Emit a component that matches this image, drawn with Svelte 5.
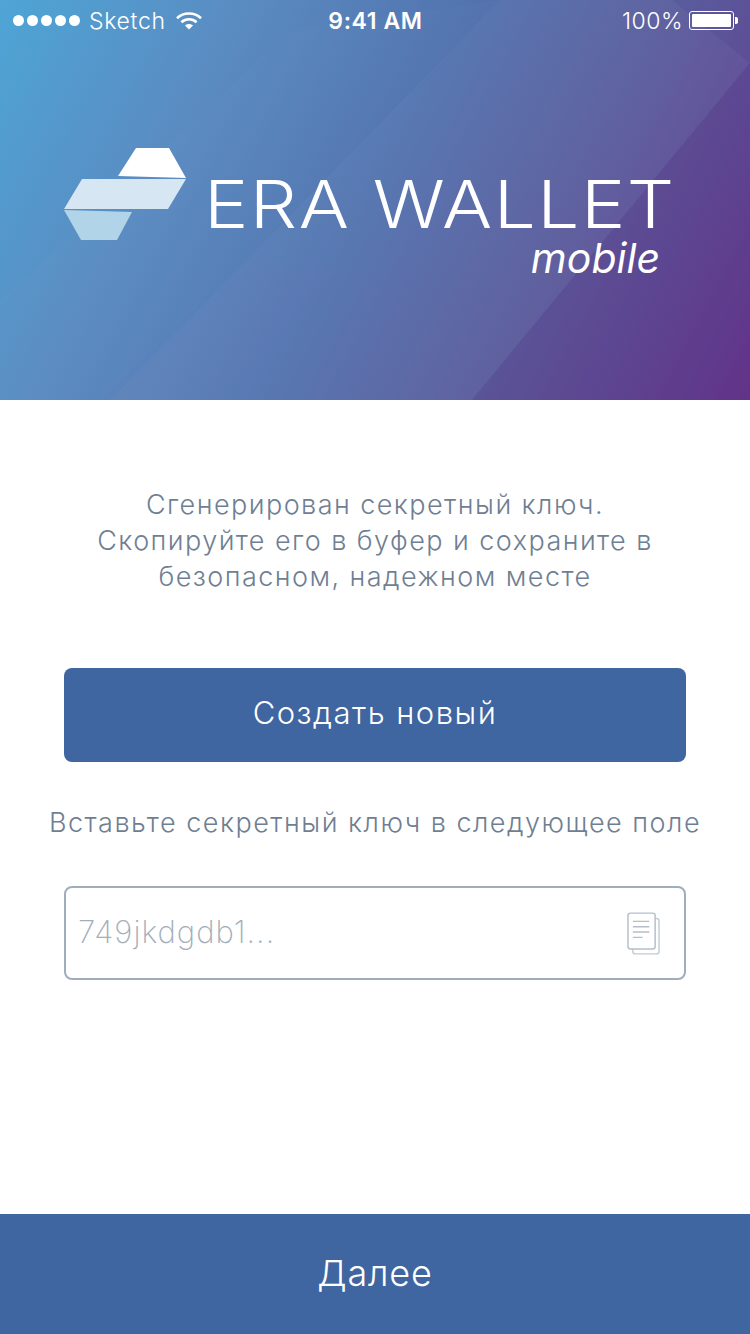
<script lang="ts">
	let secret = $state('');
</script>

<div class="page">
	<header class="hero">
		<svg class="facets" viewBox="0 0 750 400" preserveAspectRatio="none" aria-hidden="true">
			<polygon points="110,400 500,0 672,0 750,63 472,400" fill="#fff" opacity="0.04" />
			<polygon points="0,300 290,30 500,0 110,400 0,400" fill="#fff" opacity="0.015" />
			<polygon points="100,400 250,270 340,270 220,400" fill="#8a6fc0" opacity="0.06" />
			<polygon points="472,400 750,63 750,400" fill="#5a2a80" opacity="0.14" />
		</svg>

		<div class="status">
			<div class="status-left">
				<span class="dots">
					{#each [1, 2, 3, 4, 5] as dot (dot)}
						<i></i>
					{/each}
				</span>
				<span class="carrier">Sketch</span>
				<svg class="wifi" width="26" height="18" viewBox="0 0 26 18" aria-hidden="true">
					<path d="M1 6.200C7.600 0 18.400 0 25 6.200" fill="none" stroke="#fff" stroke-width="2.600" />
					<path d="M5.400 10.200C9.700 6.300 16.300 6.300 20.600 10.200" fill="none" stroke="#fff" stroke-width="2.600" />
					<path d="M9 13.600C11.400 11.600 14.600 11.600 17 13.600L13 17.600Z" fill="#fff" />
				</svg>
			</div>
			<div class="clock">9:41 AM</div>
			<div class="status-right">
				<span class="percent">100%</span>
				<span class="battery"><i></i></span>
				<span class="cap"></span>
			</div>
		</div>

		<div class="brand">
			<svg class="mark" width="122" height="92" viewBox="0 0 122 92" aria-hidden="true">
				<polygon points="54,28 72,0 105,0 122,30" fill="#fff" />
				<polygon points="18,31 122,31 104,61 0,61" fill="#d6e6f2" />
				<polygon points="0,62 68,64 53,92 17,92" fill="#b2d4e9" />
			</svg>
			<div class="wordmark">
				<div class="name">ERA WALLET</div>
				<div class="sub">mobile</div>
			</div>
		</div>
	</header>

	<main class="content">
		<p class="intro">
			Сгенерирован секретный ключ.<br />
			Скопируйте его в буфер и сохраните в<br />
			безопасном, надежном месте
		</p>

		<button class="primary" type="button">Создать новый</button>

		<p class="hint">Вставьте секретный ключ в следующее поле</p>

		<div class="field">
			<input type="text" placeholder="749jkdgdb1..." bind:value={secret} />
			<svg width="33" height="43" viewBox="0 0 34 44" aria-hidden="true">
				<path d="M6 38v2.500A2.500 2.500 0 0 0 8.500 43h22a2.500 2.500 0 0 0 2.500-2.500V9A2.500 2.500 0 0 0 30.500 6.500H29" fill="none" stroke="#c3ccd6" stroke-width="1.500" />
				<rect x="1" y="1" width="28" height="37" rx="2.500" fill="#fff" stroke="#b4bfcb" stroke-width="1.500" />
				<path d="M6 9.500h17M6 15h17M6 20.500h17M6 26h10" stroke="#b4bfcb" stroke-width="1.500" />
			</svg>
		</div>
	</main>

	<button class="next" type="button">Далее</button>
</div>

<style>
	:global(body) {
		background: #fff;
	}

	.page {
		display: flex;
		flex-direction: column;
		width: 750px;
		height: 1334px;
		overflow: hidden;
		font-family: Inter, 'Noto Sans', sans-serif;
	}

	.hero {
		position: relative;
		flex: none;
		height: 400px;
		background: linear-gradient(118deg, #4ea5d6 0%, #5a8cc2 25%, #5272ae 50%, #5a5a9c 72%, #63358a 100%);
		color: #fff;
	}

	.facets {
		position: absolute;
		inset: 0;
		width: 100%;
		height: 100%;
	}

	.status {
		position: relative;
		display: grid;
		grid-template-columns: 1fr auto 1fr;
		align-items: center;
		height: 41px;
		padding: 0 12px 0 13px;
		font-size: 23px;
		font-weight: 300;
	}

	.status-left {
		display: flex;
		align-items: center;
	}

	.carrier {
		letter-spacing: 0.700px;
	}

	.dots {
		display: flex;
		gap: 3px;
		margin-right: 9px;
	}

	.dots i {
		width: 11px;
		height: 11px;
		border-radius: 50%;
		background: #fff;
	}

	.wifi {
		margin-left: 10px;
	}

	.clock {
		font-weight: 600;
		font-size: 23px;
		letter-spacing: 0.600px;
	}

	.status-right {
		display: flex;
		align-items: center;
		justify-content: flex-end;
	}

	.percent {
		letter-spacing: 0.500px;
	}

	.battery {
		display: block;
		width: 45px;
		height: 19px;
		margin-left: 6px;
		padding: 2px;
		border: 1px solid #fff;
		border-radius: 3px;
		box-sizing: border-box;
	}

	.battery i {
		display: block;
		height: 100%;
		border-radius: 1px;
		background: #fff;
	}

	.cap {
		width: 3px;
		height: 7px;
		margin-left: 1px;
		border-radius: 0 2px 2px 0;
		background: #fff;
	}

	.brand {
		position: relative;
		display: flex;
		align-items: flex-start;
		margin: 107px 0 0 64px;
	}

	.wordmark {
		width: 470px;
		margin: 26px 0 0 18px;
	}

	.name {
		font-size: 66px;
		font-weight: 300;
		line-height: 60px;
		letter-spacing: 1.300px;
		white-space: nowrap;
		transform: scaleX(1.13);
		transform-origin: left center;
	}

	.sub {
		padding-right: 14px;
		font-size: 41px;
		font-style: italic;
		line-height: 48px;
		text-align: right;
	}

	.content {
		display: flex;
		flex: 1;
		flex-direction: column;
		padding: 87px 64px 0;
		color: #6f7f93;
	}

	.intro {
		margin: 0 -30px 73px;
		font-size: 27px;
		font-weight: 300;
		line-height: 36px;
		letter-spacing: 1.450px;
		text-align: center;
	}

	.primary,
	.next {
		border: 0;
		background: #3f66a1;
		color: #fff;
		font-family: inherit;
		font-weight: 300;
	}

	.primary {
		height: 94px;
		padding-bottom: 6px;
		border-radius: 8px;
		font-size: 31px;
		letter-spacing: 1.500px;
	}

	.hint {
		margin: 43px -30px 45px;
		font-size: 27px;
		font-weight: 300;
		line-height: 36px;
		letter-spacing: 1.500px;
		text-align: center;
		white-space: nowrap;
	}

	.field {
		display: flex;
		align-items: center;
		height: 94px;
		padding: 0 24px 0 12px;
		border: 2px solid #9fadbc;
		border-radius: 8px;
		box-sizing: border-box;
	}

	.field input {
		flex: 1;
		min-width: 0;
		border: 0;
		outline: 0;
		padding: 0 0 3px;
		font-family: inherit;
		font-size: 31px;
		font-weight: 200;
		letter-spacing: 1px;
		color: #6f7f93;
	}

	.field input::placeholder {
		color: #a3aebb;
		opacity: 1;
	}

	.next {
		flex: none;
		height: 120px;
		padding-bottom: 4px;
		font-size: 36px;
		letter-spacing: 0.800px;
	}
</style>
